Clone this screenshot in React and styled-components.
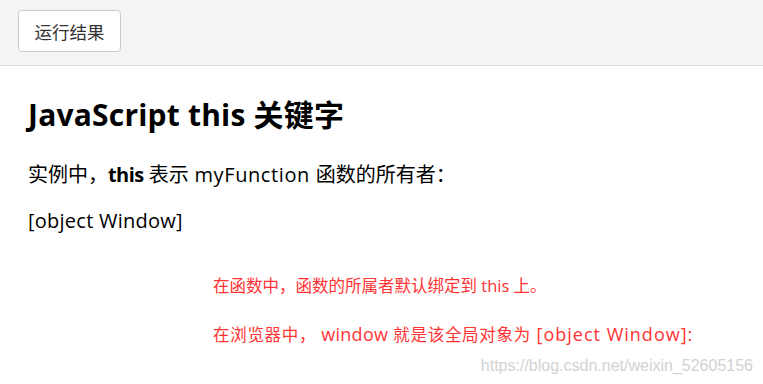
import styled, { createGlobalStyle } from "styled-components";

const GlobalStyle = createGlobalStyle`
  html, body {
    margin: 0;
    padding: 0;
    background: #fff;
  }
  body {
    font-family: "Open Sans", "Noto Sans CJK SC", sans-serif;
    color: #000;
  }
`;

// 상단 회색 툴바
const Toolbar = styled.div`
  height: 66px;
  background: #f4f4f4;
  border-bottom: 1px solid #dcdcdc;
  display: flex;
  align-items: flex-start;
  padding: 10px 0 0 18px;
  box-sizing: border-box;
`;

const RunButton = styled.button`
  width: 103px;
  height: 42px;
  background: #fff;
  border: 1px solid #ccc;
  border-radius: 4px;
  font-family: "Open Sans", "Noto Sans CJK SC", sans-serif;
  font-size: 17.5px;
  color: #333;
  padding: 0;
`;

const Content = styled.div`
  padding: 21px 0 0 28px;
`;

const Title = styled.h1`
  margin: 0;
  font-size: 30px;
  font-weight: 700;
  line-height: 56px;
  letter-spacing: 0.2px;
`;

const Paragraph = styled.p`
  margin: 18px 0 0;
  font-size: 20px;
  line-height: 28px;
`;

// 라틴 문자 부분은 살짝 넓게
const Latin = styled.span`
  letter-spacing: ${(p) => p.$spacing || "0.6px"};
  font-size: ${(p) => p.$size || "inherit"};
`;

const Strong = styled.b`
  font-weight: 700;
  letter-spacing: -0.6px;
`;

const Note = styled.div`
  margin: 27px 0 0 185px;
  display: flex;
  flex-direction: column;
`;

const NoteLine = styled.p`
  margin: 0;
  color: #ff3333;
  font-size: 16.5px;
  line-height: 48px;
  letter-spacing: ${(p) => p.$spacing || "0"};
`;

const Watermark = styled.div`
  display: flex;
  justify-content: flex-end;
  padding-right: 10px;
  margin-top: -2px;
  line-height: 18px;
  font-family: "Liberation Sans", Arial, sans-serif;
  font-size: 16px;
  color: #d2d2d2;
`;

export default function App() {
  return (
    <>
      <GlobalStyle />
      <Toolbar>
        <RunButton>运行结果</RunButton>
      </Toolbar>
      <Content>
        <Title>JavaScript this 关键字</Title>
        <Paragraph>
          实例中，<Strong>this</Strong> 表示<Latin> myFunction </Latin>函数的所有者：
        </Paragraph>
        <Paragraph>
          <Latin $spacing="0.25px">[object Window]</Latin>
        </Paragraph>
        <Note>
          <NoteLine>在函数中，函数的所属者默认绑定到 this 上。</NoteLine>
          <NoteLine $spacing="0.7px">
            在浏览器中，<Latin $size="18px" $spacing="0.3px"> window </Latin>就是该全局对象为
            <Latin $size="18px" $spacing="1px"> [object Window]:</Latin>
          </NoteLine>
        </Note>
      </Content>
      <Watermark>https://blog.csdn.net/weixin_52605156</Watermark>
    </>
  );
}
